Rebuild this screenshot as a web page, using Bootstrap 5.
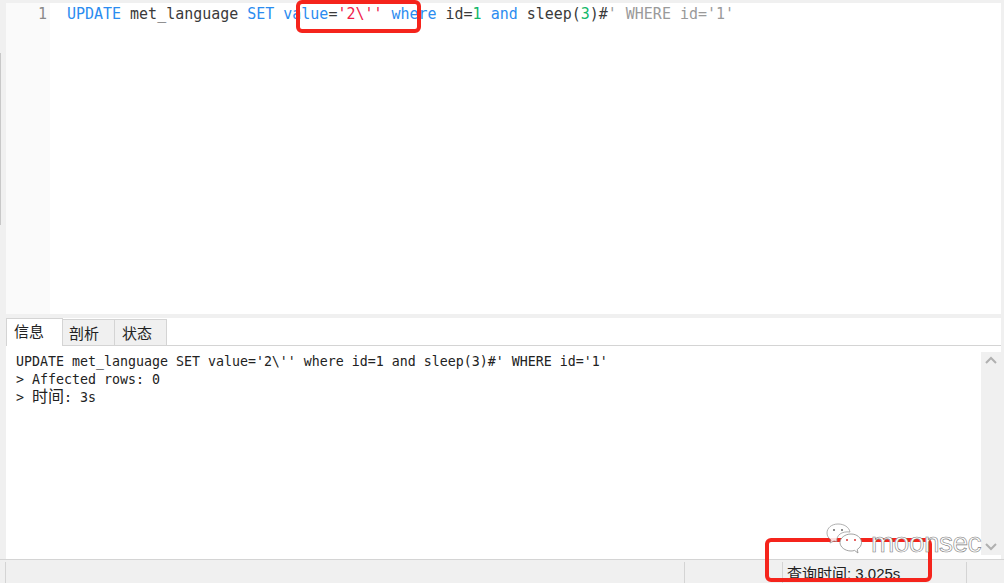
<!DOCTYPE html>
<html lang="zh">
<head>
<meta charset="utf-8">
<title>Query</title>
<link href="https://cdn.jsdelivr.net/npm/bootstrap@5.3.0/dist/css/bootstrap.min.css" rel="stylesheet">
<style>
html,body{height:100%;}
body{background:#fff;color:#222;overflow:hidden;font-family:"Liberation Sans","Noto Sans CJK SC",sans-serif;}
.shell{width:1004px;height:583px;padding:3px 3px 0 6px;position:relative;background:#f0f0f0;}
.editor{height:311px;background:#fff;font:14.98px/22px "DejaVu Sans Mono","Noto Sans CJK SC",monospace;}
.gutter{width:44px;background:#fafafa;color:#8a8a8a;text-align:right;padding:0 3px 0 0;}
.code{padding-left:17px;white-space:pre;color:#3a3a3a;}
.kw{color:#2b8cf0}.str{color:#f0204a}.num{color:#12b76a}.cmt{color:#9a9a9a}
.tabs{height:28px;margin-top:4px;background:#fff;border-bottom:1px solid #d4d4d4;}
.tabx{font-size:15px;line-height:27px;height:26px;width:52px;padding-left:6px;background:#f0f0f0;border:1px solid #d4d4d4;border-left:0;border-bottom:0;margin-top:1px;color:#222;}
.tabx.on{background:#fff;width:57px;height:28px;margin-top:0;padding-left:7px;line-height:25px;border-left:1px solid #d4d4d4;position:relative;}
.tabx.tail{padding-left:7px;}
.pane{height:213px;background:#fff;}
.log{padding:7px 0 0 10px;font:13.29px/18px "DejaVu Sans Mono","Noto Sans CJK SC",monospace;color:#222;white-space:pre;}
.han{font-size:16px;font-family:"Noto Sans CJK SC",sans-serif;line-height:0;}
.sbar{width:20px;margin-top:6px;height:203px;background:#f0f0f0;color:#b0b0b0;}
.statusx{height:24px;background:#f0f0f0;border-top:1px solid #d4d4d4;margin:0 -3px 0 -6px;font-size:15px;}
.cell{border-left:1px solid #d4d4d4;height:21px;margin-top:2px;}
.qt{line-height:24px;white-space:nowrap;padding-left:4px;color:#222;}
.scrollsliver{position:absolute;left:0;top:53px;width:1px;height:172px;background:#c8c8c8;}
.mark1{position:absolute;border:4px solid #f5241c;border-radius:6px;}
.m1{left:296px;top:0;width:125px;height:33px;}
.m2{left:765px;top:538px;width:167px;height:44px;}
.wm{position:absolute;left:826px;top:523px;display:flex;align-items:flex-start;gap:5px;}
.wmt{font:28px/1 "Liberation Sans",sans-serif;letter-spacing:-.5px;color:#fff;-webkit-text-stroke:.6px #7d7d7d;margin-top:6px;}
</style>
</head>
<body>
<div class="shell d-flex flex-column">
  <div class="editor d-flex">
    <div class="gutter flex-shrink-0">1</div>
    <div class="code"><span class="kw">UPDATE</span> met_language <span class="kw">SET</span> <span class="kw">value</span>=<span class="str">'2\''</span> <span class="kw">where</span> id=<span class="num">1</span> <span class="kw">and</span> sleep(<span class="num">3</span>)#<span class="cmt">' WHERE id='1'</span></div>
  </div>
  <div class="tabs d-flex">
    <div class="tabx on">信息</div>
    <div class="tabx">剖析</div>
    <div class="tabx tail">状态</div>
  </div>
  <div class="pane d-flex justify-content-between">
    <div class="log">UPDATE met_language SET value='2\'' where id=1 and sleep(3)#' WHERE id='1'
&gt; Affected rows: 0
&gt; <span class="han">时间</span>: 3s</div>
    <div class="sbar d-flex flex-column justify-content-between align-items-center py-1">
      <svg width="12" height="8" viewBox="0 0 12 8" fill="none" stroke="currentColor" stroke-width="2"><path d="M1 7l5-5 5 5"/></svg>
      <svg width="12" height="8" viewBox="0 0 12 8" fill="none" stroke="currentColor" stroke-width="2"><path d="M1 1l5 5 5-5"/></svg>
    </div>
  </div>
  <div class="statusx d-flex">
    <div class="cell" style="width:5px;border-left:0"></div>
    <div class="cell" style="width:679px"></div>
    <div class="cell" style="width:98px"></div>
    <div class="cell qt" style="width:184px">查询时间: 3.025s</div>
    <div class="cell flex-grow-1"></div>
  </div>
  <div class="scrollsliver"></div>
  <div class="mark1 m1"></div>
  <div class="mark1 m2"></div>
  <div class="wm">
    <svg width="40" height="34" viewBox="0 0 40 34" fill="#fff" stroke="#8b8b8b" stroke-width=".8"><path d="M12 1C5.500 1 1 5 1 10c0 3 1.500 5 4 7l-1 3 4-2c1 .3 2 .5 3 .5C10 12 16 8 24 9 23 4 18 1 12 1z" opacity=".85"/><path d="M25 11c-6 0-11 4-11 8.500S19 28 25 28c1.500 0 2.500-.2 3.500-.6L32 30l-.8-3.500c2.500-1.600 4.300-4 4.300-7C35.500 15 31 11 25 11z"/><circle cx="8" cy="7" r="1" fill="#666" stroke="none"/><circle cx="16" cy="7" r="1" fill="#666" stroke="none"/><circle cx="21" cy="17" r="1" fill="#d33" stroke="none"/><circle cx="29" cy="17" r="1" fill="#d33" stroke="none"/></svg>
    <span class="wmt">moonsec</span>
  </div>
</div>
</body>
</html>
